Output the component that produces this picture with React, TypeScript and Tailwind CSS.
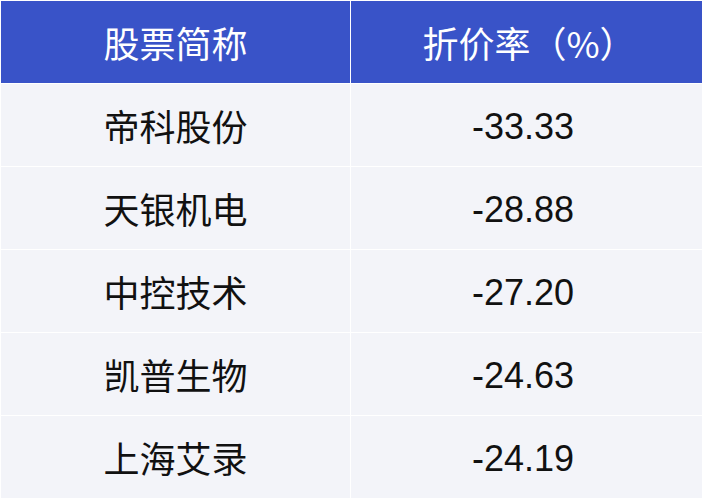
import React from "react";

const rows = [
  { name: "帝科股份", rate: "-33.33" },
  { name: "天银机电", rate: "-28.88" },
  { name: "中控技术", rate: "-27.20" },
  { name: "凯普生物", rate: "-24.63" },
  { name: "上海艾录", rate: "-24.19" },
];

const cjk = "font-['Noto_Sans_CJK_SC',sans-serif]";
const num = "font-['Liberation_Sans','Noto_Sans_CJK_SC',sans-serif]";

export default function App() {
  return (
    <div className="w-[702px] h-[500px] bg-white pt-px pl-px overflow-hidden">
      <div className="grid grid-cols-[349px_352px] auto-rows-[82px] gap-px">
        {/* header */}
        <div
          className={`bg-[#3953c8] text-white text-[36px] flex items-center justify-center ${cjk}`}>
          股票简称
        </div>
        <div
          className={`bg-[#3953c8] text-white text-[36px] flex items-center justify-center pl-1 ${cjk}`}>
          折价率（%）
        </div>

        {rows.map((row, i) => (
          <React.Fragment key={i}>
            <div
              className={`bg-[#f3f4f9] text-[#111] text-[36px] flex items-center justify-center ${cjk}`}>
              {row.name}
            </div>
            <div
              className={`bg-[#f3f4f9] text-[#111] text-[36px] flex items-center justify-center pr-2 pt-1 ${num}`}>
              {row.rate}
            </div>
          </React.Fragment>
        ))}
      </div>
    </div>
  );
}
